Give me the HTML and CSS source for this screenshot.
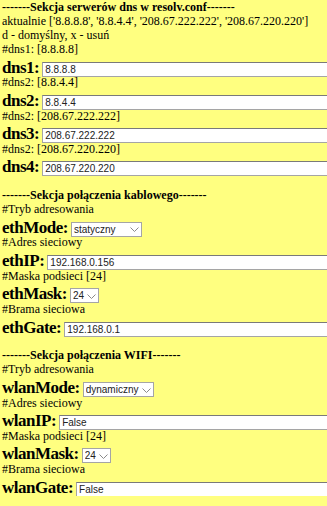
FILE: index.html
```html
<!DOCTYPE html>
<html>
<head>
  <meta charset="utf-8">
  <link rel="stylesheet" href="styles.css">
</head>
<body>
  <form class="config">
    <div class="section-title">-------Sekcja serwerów dns w resolv.conf-------</div>
    <div class="note">aktualnie ['8.8.8.8', '8.8.4.4', '208.67.222.222', '208.67.220.220']</div>
    <div class="note">d - domyślny, x - usuń</div>

    <div class="note">#dns1: [8.8.8.8]</div>
    <div class="field"><label for="dns1">dns1:</label> <input type="text" id="dns1" value="8.8.8.8"></div>
    <div class="note">#dns2: [8.8.4.4]</div>
    <div class="field"><label for="dns2">dns2:</label> <input type="text" id="dns2" value="8.8.4.4"></div>
    <div class="note">#dns2: [208.67.222.222]</div>
    <div class="field"><label for="dns3">dns3:</label> <input type="text" id="dns3" value="208.67.222.222"></div>
    <div class="note">#dns2: [208.67.220.220]</div>
    <div class="field"><label for="dns4">dns4:</label> <input type="text" id="dns4" value="208.67.220.220"></div>

    <div class="section-title spaced">-------Sekcja połączenia kablowego-------</div>
    <div class="note">#Tryb adresowania</div>
    <div class="field">
      <label for="ethMode">ethMode:</label>
      <span class="select-wrap">
        <select id="ethMode" class="mode">
          <option selected>statyczny</option>
          <option>dynamiczny</option>
        </select>
        <svg class="chevron" width="9" height="5" viewBox="0 0 9 5"><path d="M0.5 0.5 L4.5 4.5 L8.5 0.5" fill="none" stroke="#8a8a8a" stroke-width="1"/></svg>
      </span>
    </div>
    <div class="note">#Adres sieciowy</div>
    <div class="field"><label for="ethIP">ethIP:</label> <input type="text" id="ethIP" value="192.168.0.156"></div>
    <div class="note">#Maska podsieci [24]</div>
    <div class="field">
      <label for="ethMask">ethMask:</label>
      <span class="select-wrap">
        <select id="ethMask" class="mask">
          <option>16</option>
          <option selected>24</option>
          <option>32</option>
        </select>
        <svg class="chevron" width="9" height="5" viewBox="0 0 9 5"><path d="M0.5 0.5 L4.5 4.5 L8.5 0.5" fill="none" stroke="#8a8a8a" stroke-width="1"/></svg>
      </span>
    </div>
    <div class="note">#Brama sieciowa</div>
    <div class="field"><label for="ethGate">ethGate:</label> <input type="text" id="ethGate" value="192.168.0.1"></div>

    <div class="section-title spaced">-------Sekcja połączenia WIFI-------</div>
    <div class="note">#Tryb adresowania</div>
    <div class="field">
      <label for="wlanMode">wlanMode:</label>
      <span class="select-wrap">
        <select id="wlanMode" class="mode">
          <option>statyczny</option>
          <option selected>dynamiczny</option>
        </select>
        <svg class="chevron" width="9" height="5" viewBox="0 0 9 5"><path d="M0.5 0.5 L4.5 4.5 L8.5 0.5" fill="none" stroke="#8a8a8a" stroke-width="1"/></svg>
      </span>
    </div>
    <div class="note">#Adres sieciowy</div>
    <div class="field"><label for="wlanIP">wlanIP:</label> <input type="text" id="wlanIP" value="False"></div>
    <div class="note">#Maska podsieci [24]</div>
    <div class="field">
      <label for="wlanMask">wlanMask:</label>
      <span class="select-wrap">
        <select id="wlanMask" class="mask">
          <option>16</option>
          <option selected>24</option>
          <option>32</option>
        </select>
        <svg class="chevron" width="9" height="5" viewBox="0 0 9 5"><path d="M0.5 0.5 L4.5 4.5 L8.5 0.5" fill="none" stroke="#8a8a8a" stroke-width="1"/></svg>
      </span>
    </div>
    <div class="note">#Brama sieciowa</div>
    <div class="field"><label for="wlanGate">wlanGate:</label> <input type="text" id="wlanGate" value="False"></div>
  </form>
</body>
</html>
```

FILE: styles.css
```css
html, body {
  overflow: hidden;
}
body {
  margin: 0;
  padding: 0 2px;
  background-color: #ffff80;
  color: #000;
  font-family: "Liberation Serif", "Times New Roman", serif;
  font-size: 12px;
}
.config {
  margin: 0;
}
.section-title {
  font-weight: bold;
  line-height: 14px;
  white-space: nowrap;
}
.section-title.spaced {
  margin-top: 13px;
}
.note {
  line-height: 14px;
  white-space: nowrap;
}
.field {
  box-sizing: border-box;
  height: 19.3px;
  padding-top: 1.5px;
  line-height: 19.3px;
  white-space: nowrap;
}
.field label {
  font-size: 17px;
  font-weight: bold;
  letter-spacing: -0.5px;
}
input[type="text"] {
  box-sizing: border-box;
  width: 320px;
  height: 15px;
  margin: 0;
  padding: 0 2px;
  border: 1px solid #a5a5a5;
  border-top-color: #7a7a7a;
  border-radius: 0;
  background: #fff;
  font-family: "Liberation Sans", Arial, sans-serif;
  font-size: 10px;
  color: #222;
  vertical-align: baseline;
}
.select-wrap {
  position: relative;
  display: inline-block;
  vertical-align: baseline;
}
select {
  appearance: none;
  -webkit-appearance: none;
  box-sizing: border-box;
  height: 15px;
  margin: 0;
  padding: 0 12px 0 2px;
  border: 1px solid #a5a5a5;
  border-radius: 0;
  background: #fff;
  font-family: "Liberation Sans", Arial, sans-serif;
  font-size: 10px;
  color: #222;
}
select.mode {
  width: 71px;
}
select.mask {
  width: 29px;
}
.chevron {
  position: absolute;
  right: 3px;
  top: 50%;
  margin-top: -2px;
  pointer-events: none;
}
```
